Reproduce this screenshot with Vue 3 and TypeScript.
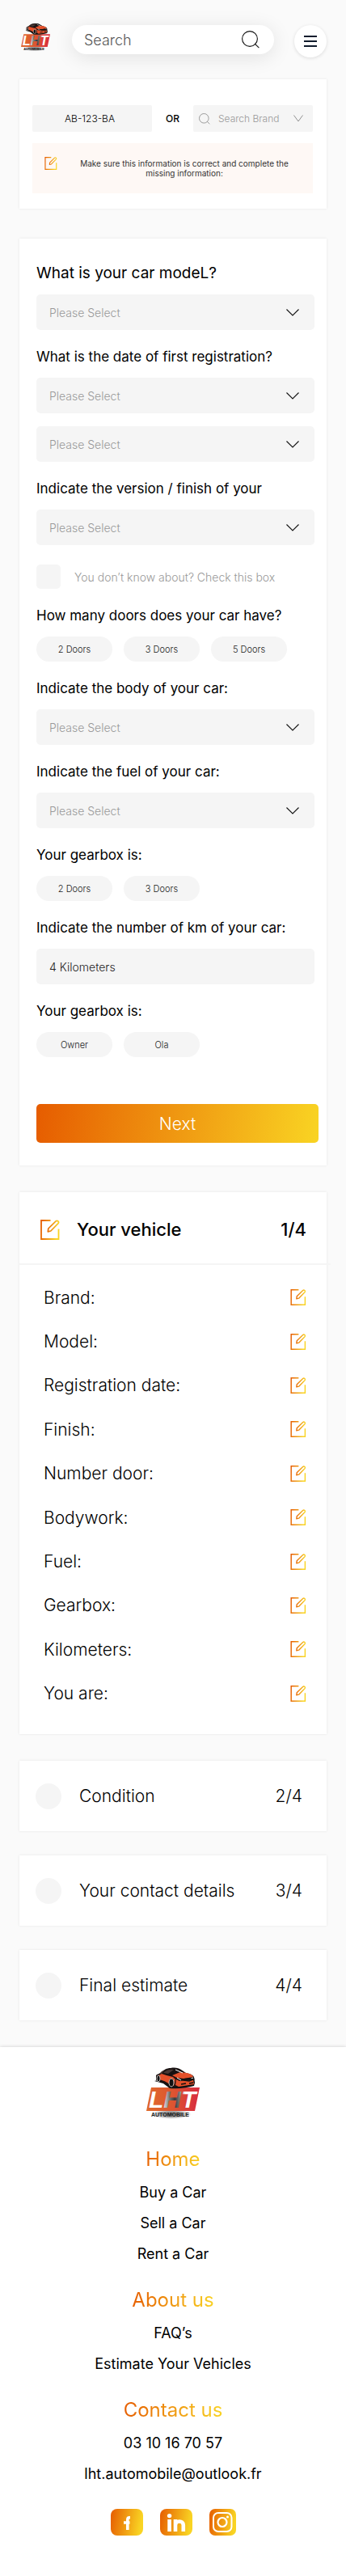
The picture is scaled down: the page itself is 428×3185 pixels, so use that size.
<script setup lang="ts">
import { ref } from 'vue'

interface Question {
  id: string
  label: string
  kind: 'select' | 'pills' | 'text'
  fields?: number
  options?: string[]
  unsure?: boolean
}

const questions: Question[] = [
  { id: 'model', label: 'What is your car modeL?', kind: 'select', fields: 1 },
  { id: 'date', label: 'What is the date of first registration?', kind: 'select', fields: 2 },
  { id: 'version', label: 'Indicate the version / finish of your', kind: 'select', fields: 1, unsure: true },
  { id: 'doors', label: 'How many doors does your car have?', kind: 'pills', options: ['2 Doors', '3 Doors', '5 Doors'] },
  { id: 'body', label: 'Indicate the body of your car:', kind: 'select', fields: 1 },
  { id: 'fuel', label: 'Indicate the fuel of your car:', kind: 'select', fields: 1 },
  { id: 'gearbox', label: 'Your gearbox is:', kind: 'pills', options: ['2 Doors', '3 Doors'] },
  { id: 'km', label: 'Indicate the number of km of your car:', kind: 'text' },
  { id: 'owner', label: 'Your gearbox is:', kind: 'pills', options: ['Owner', 'Ola'] },
]

const details = [
  'Brand:', 'Model:', 'Registration date:', 'Finish:', 'Number door:',
  'Bodywork:', 'Fuel:', 'Gearbox:', 'Kilometers:', 'You are:',
]

const steps = [
  { name: 'Condition', count: '2/4' },
  { name: 'Your contact details', count: '3/4' },
  { name: 'Final estimate', count: '4/4' },
]

const footerGroups = [
  { title: 'Home', links: ['Buy a Car', 'Sell a Car', 'Rent a Car'] },
  { title: 'About us', links: ['FAQ’s', 'Estimate Your Vehicles'] },
  { title: 'Contact us', links: ['03 10 16 70 57', 'lht.automobile@outlook.fr'] },
]

const plate = ref('AB-123-BA')
const mileage = ref('4 Kilometers')
const chosen = ref<Record<string, string>>({})
</script>

<template>
  <div class="page">
    <svg class="defs" width="0" height="0" aria-hidden="true">
      <defs>
        <linearGradient id="sun" x1="0" y1="0" x2="1" y2="0.15">
          <stop offset="0" stop-color="#e65c00" />
          <stop offset="1" stop-color="#f9d423" />
        </linearGradient>
        <linearGradient id="plateFill" x1="0" y1="0" x2="1" y2="0">
          <stop offset="0" stop-color="#e06a2a" />
          <stop offset="0.5" stop-color="#dd5531" />
          <stop offset="1" stop-color="#d82b40" />
        </linearGradient>
        <linearGradient id="letterFill" x1="0" y1="0" x2="1" y2="0">
          <stop offset="0" stop-color="#ffffff" />
          <stop offset="0.27" stop-color="#ffffff" />
          <stop offset="0.42" stop-color="#777777" />
          <stop offset="0.53" stop-color="#3a3a3a" />
          <stop offset="0.62" stop-color="#777777" />
          <stop offset="0.74" stop-color="#ffffff" />
          <stop offset="1" stop-color="#ffffff" />
        </linearGradient>
        <radialGradient id="shade">
          <stop offset="0" stop-color="#333333" stop-opacity="0.8" />
          <stop offset="0.6" stop-color="#555555" stop-opacity="0.5" />
          <stop offset="1" stop-color="#888888" stop-opacity="0" />
        </radialGradient>
        <symbol id="edit" viewBox="0 0 24 25">
          <path d="M12.5 1H1v23h21.5V11.5" fill="none" stroke="url(#sun)" stroke-width="1.8" />
          <path d="M9.3 14.8l.5-3.8 9.3-9.2c1.8-1.5 4.5.9 2.9 2.8l-9.2 9.4z" fill="none" stroke="url(#sun)" stroke-width="1.7" stroke-linejoin="round" />
        </symbol>
        <symbol id="logo" viewBox="0 0 66 64">
          <ellipse cx="31" cy="58" rx="25" ry="6" fill="url(#shade)" />
          <path d="M6 25h60l-6 29H0z" fill="url(#plateFill)" />
          <text x="3" y="50" font-family="Liberation Sans, Arial, sans-serif" font-size="30" font-weight="700" font-style="italic" fill="url(#letterFill)">LHT</text>
          <text x="6" y="61" font-family="Liberation Sans, Arial, sans-serif" font-size="7" font-weight="700" fill="#222222">AUTOMOBILE</text>
          <path d="M10 17l11 3 8 6c12 1 22-1 30-3l1-4-20-9z" fill="#111111" />
          <path d="M12 10c2-2 4-2 6-3 4-4 7-6 12-6 6-1 10 0 13 2l6 4c6 1 9 3 10 5l1 7c-1 2-3 3-6 3l-19 2c-3 1-6 0-8-3L12 16z" fill="#181111" />
          <path d="M13 11l6-3 6 2 8 2 3 3-2 8c-5-1-9-5-12-6l-9-3zM37 15l4 2 17-1 1 5-19 3-4-2zM32 10l10-4 8 1c4 1 7 2 8 5l-12 2-8-1z" fill="#e4502a" />
          <path d="M21 7c3-4 9-5 13-4l-7 5zM16 8l3-3 6-3c-3 2-5 4-6 6z" fill="#493733" />
          <path d="M36 3l9 4M38 13l5 3M55 14l3-1" stroke="#ffffff" stroke-width="1" fill="none" />
          <ellipse cx="31" cy="19" rx="3" ry="5" fill="#111111" stroke="#b6b6b6" />
          <ellipse cx="15" cy="14" rx="2" ry="4" fill="#111111" stroke="#b6b6b6" />
          <path d="M44 15l10-1 4 1-5 2-7-1M43 21l6-1M53 20l5-1" stroke="#111111" stroke-width="1.5" fill="none" />
        </symbol>
      </defs>
    </svg>

    <header class="topbar">
      <a class="brand" href="#" aria-label="LHT Automobile">
        <svg viewBox="0 0 66 64"><use href="#logo" /></svg>
      </a>
      <form class="search" role="search" @submit.prevent>
        <input type="search" placeholder="Search" aria-label="Search" />
        <button type="submit" aria-label="Submit search">
          <svg viewBox="0 0 22 22" width="22" height="22" fill="none" stroke="#111" stroke-width="1.1">
            <circle cx="10" cy="10" r="9.4" /><path d="M16 15.8l5.4 5.4" />
          </svg>
        </button>
      </form>
      <button class="menu" type="button" aria-label="Menu">
        <svg viewBox="0 0 16 14" width="16" height="14" stroke="#111c2d" stroke-width="2"><path d="M0 1h16M0 7h16M0 13h16" /></svg>
      </button>
    </header>

    <main>
      <section class="card lookup">
        <div class="lookup-row">
          <input v-model="plate" class="plate" aria-label="Registration plate" />
          <span class="or">OR</span>
          <div class="brand-select">
            <svg viewBox="0 0 14 14" width="14" height="14" fill="none" stroke="#777" stroke-width="0.7">
              <circle cx="6.3" cy="6.3" r="5.8" /><path d="M10.3 10.3l3 3" />
            </svg>
            <select aria-label="Search Brand"><option>Search Brand</option></select>
            <svg viewBox="0 0 12 9" width="12" height="9" fill="none" stroke="#777" stroke-width="0.8"><path d="M.5.5L6 8 11.5.5" /></svg>
          </div>
        </div>
        <div class="notice">
          <svg class="notice-icon" width="16" height="16"><use href="#edit" /></svg>
          <p>Make sure this information is correct and complete the missing information:</p>
        </div>
      </section>

      <form class="card form" @submit.prevent>
        <div v-for="q in questions" :key="q.id" class="question" role="group" :aria-labelledby="q.id + '-label'">
          <label :id="q.id + '-label'" class="question-label" :for="q.kind === 'pills' ? undefined : q.id + '-1'">{{ q.label }}</label>
          <template v-if="q.kind === 'select'">
            <div v-for="n in q.fields" :key="n" class="select">
              <select :id="q.id + '-' + n" :aria-labelledby="q.id + '-label'"><option>Please Select</option></select>
              <svg viewBox="0 0 16 9" width="16" height="9" fill="none" stroke="#111" stroke-width="1.1"><path d="M.5.5L8 8 15.5.5" /></svg>
            </div>
          </template>
          <div v-else-if="q.kind === 'pills'" class="pills">
            <button
              v-for="o in q.options" :key="o" type="button" class="pill"
              :aria-pressed="chosen[q.id] === o" @click="chosen[q.id] = o"
            >{{ o }}</button>
          </div>
          <input v-else :id="q.id + '-1'" v-model="mileage" class="text-field" />
          <label v-if="q.unsure" class="unsure">
            <input type="checkbox" />
            <span>You don’t know about? Check this box</span>
          </label>
        </div>
        <button class="next" type="submit">Next</button>
      </form>

      <section class="card vehicle">
        <div class="vehicle-head">
          <svg width="24" height="25"><use href="#edit" /></svg>
          <h2>Your vehicle</h2>
          <span>1/4</span>
        </div>
        <ul class="details">
          <li v-for="d in details" :key="d">
            <span>{{ d }}</span>
            <button type="button" :aria-label="'Edit ' + d">
              <svg width="20" height="20"><use href="#edit" /></svg>
            </button>
          </li>
        </ul>
      </section>

      <section v-for="s in steps" :key="s.name" class="card step">
        <i class="dot"></i>
        <h2>{{ s.name }}</h2>
        <span>{{ s.count }}</span>
      </section>
    </main>

    <footer class="footer">
      <svg class="footer-logo" viewBox="0 0 66 64" role="img" aria-label="LHT Automobile"><use href="#logo" /></svg>
      <nav v-for="g in footerGroups" :key="g.title" :aria-label="g.title">
        <h3>{{ g.title }}</h3>
        <a v-for="l in g.links" :key="l" href="#">{{ l }}</a>
      </nav>
      <div class="social">
        <a href="#" aria-label="Facebook">
          <svg viewBox="0 0 40 33" width="40" height="33">
            <rect width="40" height="33" rx="8" fill="url(#sun)" />
            <path d="M24 10.8h-1c-1.9 0-2.2.8-2.2 2.5V26M16 17h7.5" fill="none" stroke="#fff" stroke-width="3.6" />
          </svg>
        </a>
        <a href="#" aria-label="LinkedIn">
          <svg viewBox="0 0 40 33" width="40" height="33">
            <rect width="40" height="33" rx="8" fill="url(#sun)" />
            <circle cx="11.6" cy="8.6" r="2.7" fill="#fff" />
            <path d="M11.6 13v15M19 28V13M19 20c0-6 9.8-6 9.8 0v8" fill="none" stroke="#fff" stroke-width="4.6" />
          </svg>
        </a>
        <a href="#" aria-label="Instagram">
          <svg viewBox="0 0 33 33" width="33" height="33">
            <rect width="33" height="33" rx="7" fill="url(#sun)" />
            <rect x="5" y="5" width="22.5" height="23" rx="6" fill="none" stroke="#fff" stroke-width="2" />
            <circle cx="16" cy="16.5" r="5.5" fill="none" stroke="#fff" stroke-width="2.2" />
            <circle cx="22.5" cy="10" r="1.5" fill="#fff" />
          </svg>
        </a>
      </div>
    </footer>
  </div>
</template>

<style>
body {
  margin: 0;
  background: #fafafa;
}
</style>

<style scoped>
.page {
  font-family: Inter, "Liberation Sans", sans-serif;
  font-weight: 300;
  color: #000;
  background: #fafafa;
}
.page *, .page *::before {
  box-sizing: border-box;
}
.defs {
  position: absolute;
}
svg {
  display: block;
  flex: none;
}
button, input, select {
  font: inherit;
  color: inherit;
  border: 0;
  margin: 0;
  padding: 0;
  background: none;
  border-radius: 0;
  appearance: none;
  min-width: 0;
}
button {
  cursor: pointer;
}
h2, h3, p, ul {
  margin: 0;
  padding: 0;
  font-weight: inherit;
}
a {
  color: inherit;
  text-decoration: none;
}

.topbar {
  display: flex;
  align-items: flex-start;
  padding: 28px 24px 27px 26px;
}
.brand svg {
  width: 36px;
  height: 36px;
}
.search {
  flex: 1;
  min-width: 0;
  display: flex;
  align-items: center;
  height: 36px;
  margin: 3px 25px 0 27px;
  padding: 0 18px 0 15px;
  border-radius: 18px;
  background: #fff;
  box-shadow: 0 4px 24px rgba(0, 0, 0, 0.1);
}
.search input {
  flex: 1;
  width: 100%;
  font-size: 18px;
}
.search input::placeholder {
  color: #555;
  opacity: 1;
}
.search button, .menu {
  flex: none;
}
.menu {
  display: grid;
  place-items: center;
  width: 40px;
  height: 40px;
  margin-top: 3px;
  border-radius: 50%;
  background: #fff;
  box-shadow: 0 1px 4px rgba(0, 0, 0, 0.12);
}

main {
  padding: 0 24px 33px;
}
.card {
  background: #fff;
  box-shadow: 0 0 3px rgba(0, 0, 0, 0.09);
}

.lookup {
  padding: 32px 17px 19px 16px;
}
.lookup-row {
  display: grid;
  grid-template-columns: 1fr 51px 1fr;
  align-items: center;
}
.plate, .brand-select {
  height: 33px;
  border-radius: 2px;
  background: #f5f5f5;
  font-size: 12px;
}
.plate {
  width: 100%;
  padding-right: 6px;
  text-align: center;
}
.or {
  text-align: center;
  font-size: 12px;
  font-weight: 500;
}
.brand-select {
  display: flex;
  align-items: center;
  min-width: 0;
  padding: 0 12px 0 7px;
}
.brand-select select {
  flex: 1;
  margin-left: 10px;
  color: #999;
}
.notice {
  display: flex;
  align-items: flex-start;
  margin-top: 14px;
  padding: 17px 16px 15px 15px;
  min-height: 62px;
  background: #fef8f5;
}
.notice p {
  flex: 1;
  margin-top: 2px;
  padding-left: 14px;
  text-align: center;
  font-size: 10px;
  line-height: 12px;
  font-weight: 400;
  color: #333;
}

.form {
  margin-top: 37px;
  padding: 10px 10px 28px 21px;
}
.question {
  padding-right: 5px;
}
.question-label {
  display: block;
  padding: 22px 0 15px;
  font-size: 17px;
  line-height: 22px;
  font-weight: 400;
}
.question:first-child .question-label {
  font-size: 19px;
}
.select {
  display: grid;
  align-items: center;
}
.select + .select {
  margin-top: 16px;
}
.select > * {
  grid-area: 1 / 1;
}
.select svg {
  justify-self: end;
  margin-right: 19px;
  pointer-events: none;
}
.select select, .text-field {
  width: 100%;
  height: 44px;
  padding: 0 16px;
  border-radius: 5px;
  background: #f5f5f5;
  font-size: 14px;
  color: #999;
}
.text-field {
  color: #222;
}
.unsure {
  display: flex;
  align-items: center;
  gap: 17px;
  margin-top: 24px;
  font-size: 14px;
  color: #999;
}
.unsure input {
  width: 30px;
  height: 30px;
  border-radius: 5px;
  background: #f5f5f5;
}
.unsure input:checked {
  background: #f0930f;
}
.pills {
  display: flex;
  gap: 14px;
}
.pill {
  width: 94px;
  height: 31px;
  border-radius: 16px;
  background: #f5f5f5;
  font-size: 11px;
  color: #222;
}
.pill[aria-pressed="true"] {
  background: #fbe3c4;
}
.next {
  display: block;
  width: 100%;
  height: 48px;
  margin-top: 58px;
  border-radius: 5px;
  background: linear-gradient(98deg, #e65c00, #f9d423);
  font-size: 21px;
  color: #fff;
}

.vehicle {
  margin-top: 33px;
  padding-bottom: 23px;
}
.vehicle-head {
  display: flex;
  align-items: center;
  height: 90px;
  margin-right: -5px;
  padding: 4px 30px 0 26px;
  border-bottom: 2px solid #f5f5f5;
  font-size: 22px;
  font-weight: 500;
}
.vehicle-head h2 {
  flex: 1;
  margin-left: 21px;
  font-size: 22px;
}
.details {
  display: grid;
  grid-auto-rows: 1fr;
  min-height: 544px;
  margin-top: 13px;
  padding: 0 25px 0 30px;
  list-style: none;
}
.details li {
  display: flex;
  align-items: center;
  justify-content: space-between;
  font-size: 21px;
}

.step {
  display: flex;
  align-items: center;
  height: 87px;
  margin-top: 30px;
  padding: 0 30px 0 20px;
  font-size: 21px;
}
.vehicle + .step {
  margin-top: 33px;
}
.step h2 {
  flex: 1;
  margin-left: 22px;
  font-size: 21px;
}
.dot {
  width: 32px;
  height: 32px;
  border-radius: 50%;
  background: #f5f5f5;
}

.footer {
  display: flex;
  flex-direction: column;
  align-items: center;
  padding: 25px 24px 50px;
  background: #fff;
  box-shadow: 0 0 4px rgba(0, 0, 0, 0.2);
  font-weight: 400;
}
.footer-logo {
  width: 66px;
  height: 64px;
  margin-bottom: 12px;
}
nav {
  display: flex;
  flex-direction: column;
  align-items: center;
  padding-top: 22px;
}
nav h3 {
  font-size: 24px;
  line-height: 32px;
  margin-bottom: 6px;
  background: linear-gradient(98deg, #e65c00, #f9d423);
  background-clip: text;
  color: transparent;
}
nav a {
  font-size: 18px;
  line-height: 38px;
}
.social {
  display: flex;
  gap: 21px;
  margin-top: 24px;
}
</style>
